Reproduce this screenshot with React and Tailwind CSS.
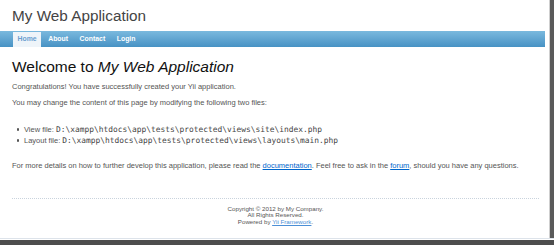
import React from 'react';

const navItems = ['Home', 'About', 'Contact', 'Login'];

const App = () => {
  return (
    <div className="w-[554px] h-[245px] overflow-hidden flex flex-col bg-white font-['Liberation_Sans',Arial,sans-serif]">
      <div className="flex h-[238px]">
        <div className="w-[549px] flex flex-col">
          {/* header */}
          <div className="h-[31px] pt-[8px] pl-[12px] text-[15.3px] leading-none text-[#444]">My Web Application</div>

          {/* main menu */}
          <div className="w-[545px] h-[16px] pt-[1px] pl-[13px] flex gap-[2.5px] bg-gradient-to-b from-[#7ab9de] to-[#4792c4]">
            {navItems.map((item, i) => (
              <div
                key={item}
                className={
                  i === 0
                    ? 'h-[15px] px-[4.5px] flex items-center text-[6.9px] font-bold text-[#6a9fd0] bg-[#eef4f9]'
                    : 'h-[15px] px-[4.5px] flex items-center text-[6.9px] font-bold text-white'
                }
              >
                {item}
              </div>
            ))}
          </div>

          {/* content */}
          <div className="pl-[12px] pr-[10px] text-[#555]">
            <h1 className="mt-[12px] text-[15.5px] leading-none text-[#111]">
              Welcome to <i>My Web Application</i>
            </h1>
            <p className="mt-[6px] text-[7.5px] leading-[11px]">
              Congratulations! You have successfully created your Yii application.
            </p>
            <p className="mt-[5.4px] text-[7.5px] leading-[11px]">
              You may change the content of this page by modifying the following two files:
            </p>
            <ul className="mt-[16px] text-[7.5px]">
              <li className="flex items-baseline h-[11px] leading-[11px]">
                <span className="self-center ml-[4.5px] mr-[5px] w-[2.5px] h-[2.5px] rounded-full bg-[#555]" />
                <span>View file:&nbsp;</span>
                <code className="font-['DejaVu_Sans_Mono',monospace] text-[7.9px] text-[#444]">D:\xampp\htdocs\app\tests\protected\views\site\index.php</code>
              </li>
              <li className="flex items-baseline h-[11px] leading-[11px]">
                <span className="self-center ml-[4.5px] mr-[5px] w-[2.5px] h-[2.5px] rounded-full bg-[#555]" />
                <span>Layout file:&nbsp;</span>
                <code className="font-['DejaVu_Sans_Mono',monospace] text-[7.9px] text-[#444]">D:\xampp\htdocs\app\tests\protected\views\layouts\main.php</code>
              </li>
            </ul>
            <p className="mt-[13.7px] text-[7.5px] leading-[11px]">
              For more details on how to further develop this application, please read the{' '}
              <a className="text-[#0066cc] underline">documentation</a>. Feel free to ask in the{' '}
              <a className="text-[#0066cc] underline">forum</a>, should you have any questions.
            </p>
          </div>

          {/* footer */}
          <div className="mt-[27px] ml-[12px] w-[527px] border-t border-dotted border-[#c9d3dd] pt-[7px] text-center text-[6.2px] leading-[6.7px] text-[#555]">
            <div>Copyright © 2012 by My Company.</div>
            <div>All Rights Reserved.</div>
            <div>
              Powered by <a className="text-[#4b8fd6] underline">Yii Framework</a>.
            </div>
          </div>
        </div>
        <div className="w-[5px] bg-[#5a5a5a] border-l border-[#cfcfcf]" />
      </div>
      <div className="h-[1px] bg-[#dde3ea]" />
      <div className="h-[1px] bg-white" />
      <div className="flex-1 bg-[#4d4d4d]" />
    </div>
  );
};

export default App;
